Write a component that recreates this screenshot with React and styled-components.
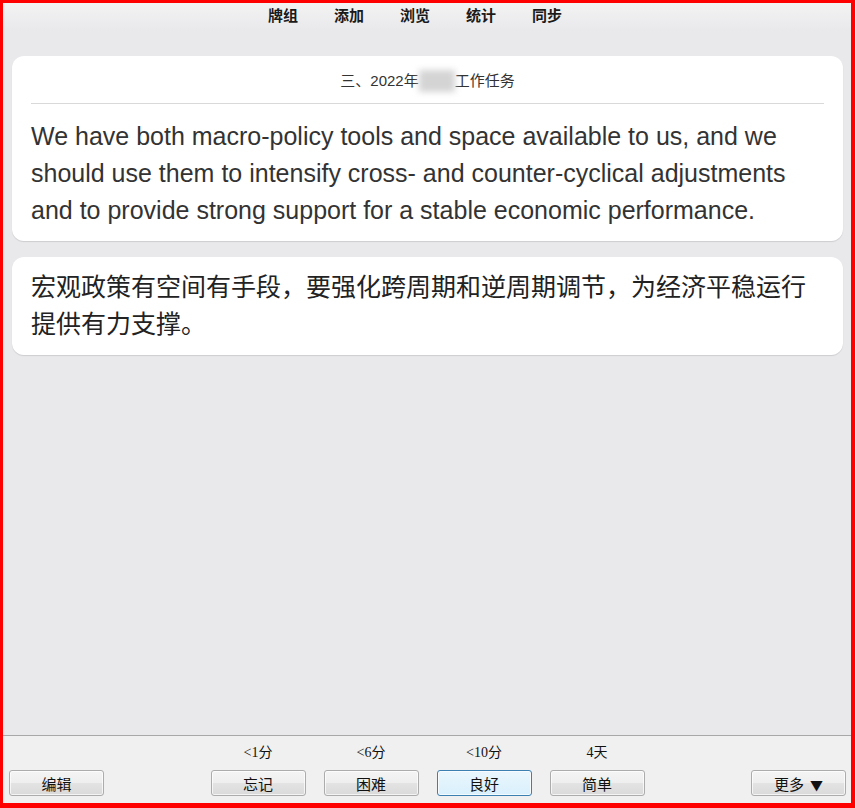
import React from "react";
import styled, { createGlobalStyle } from "styled-components";

const Global = createGlobalStyle`
  html, body { margin: 0; padding: 0; }
  body { font-family: "Liberation Sans", Arial, "Noto Sans CJK SC", sans-serif; }
  * { box-sizing: border-box; }
`;

const Frame = styled.div`
  width: 855px;
  height: 808px;
  border-style: solid;
  border-color: #f00;
  border-width: 3px 4px 5px 3px;
  display: flex;
  flex-direction: column;
  background: #e9e9ec;
  overflow: hidden;
`;

const Nav = styled.nav`
  height: 27px;
  display: flex;
  justify-content: center;
  align-items: flex-start;
  padding-right: 24px;
  background: linear-gradient(#f3f3f3, #e9e9ec);
`;

const NavLink = styled.a`
  font-family: "Noto Sans CJK SC", sans-serif;
  font-weight: 700;
  font-size: 15px;
  color: #1a1a1a;
  padding: 0 18px;
  line-height: 24px;
  text-decoration: none;
`;

const Main = styled.main`
  flex: 1;
  display: flex;
  flex-direction: column;
  gap: 16px;
  padding: 26px 8px 0 9px;
`;

const Card = styled.section`
  background: #fff;
  border-radius: 12px;
  box-shadow: 0 1px 1px rgba(0, 0, 0, 0.12);
  padding: ${(p) => p.$pad || "12px 19px"};
`;

const Title = styled.div`
  text-align: center;
  font-family: "Liberation Sans", Arial, "Noto Sans CJK SC", sans-serif;
  font-size: 15px;
  line-height: 26px;
  color: #333;
`;

const Blur = styled.span`
  display: inline-block;
  width: 36px;
  height: 22px;
  vertical-align: -6px;
  background: #d4d4d4;
  filter: blur(3px);
`;

const Rule = styled.hr`
  border: none;
  border-top: 1px solid #d9d9d9;
  margin: 9px 0 14px;
`;

const English = styled.p`
  margin: 0;
  font-family: "Liberation Sans", Arial, sans-serif;
  font-size: 25px;
  line-height: 37px;
  color: #333;
`;

const Chinese = styled.p`
  margin: 0;
  font-family: "Noto Sans CJK SC", serif;
  font-size: 25px;
  line-height: 37px;
  color: #222;
`;

const Bar = styled.footer`
  border-top: 1px solid #a8a8a8;
  background: #f0f0f0;
  display: grid;
  grid-template-columns: 1fr auto 1fr;
  align-items: end;
  padding: 8px 5px 7px 6px;
`;

const Answers = styled.div`
  display: flex;
  gap: 18px;
`;

const Answer = styled.div`
  display: flex;
  flex-direction: column;
  align-items: center;
  gap: 8px;
`;

const Due = styled.span`
  font-family: "Liberation Serif", "Noto Sans CJK SC", serif;
  font-size: 14px;
  line-height: 18px;
  color: #111;
`;

const Button = styled.button`
  width: 95px;
  height: 26px;
  padding: 0;
  border: 1px solid ${(p) => (p.$focus ? "#3c7fb1" : "#acacac")};
  border-radius: 3px;
  background: ${(p) =>
    p.$focus
      ? "linear-gradient(#eaf6fd, #d9f0fc)"
      : "linear-gradient(#f4f4f4 0%, #eeeeee 50%, #e3e3e3 51%, #dadada 100%)"};
  box-shadow: inset 0 0 0 1px rgba(255, 255, 255, 0.7);
  font-family: "Noto Sans CJK SC", sans-serif;
  font-size: 15px;
  color: #111;
`;

const Arrow = styled.span`
  margin-left: 6px;
  font-size: 13px;
`;

const Side = styled.div`
  display: flex;
  justify-content: ${(p) => p.$justify};
`;

const answers = [
  ["<1分", "忘记"],
  ["<6分", "困难"],
  ["<10分", "良好", true],
  ["4天", "简单"],
];

export default function App() {
  return (
    <>
      <Global />
      <Frame>
        <Nav>
          {["牌组", "添加", "浏览", "统计", "同步"].map((t) => (
            <NavLink key={t}>{t}</NavLink>
          ))}
        </Nav>
        <Main>
          <Card>
            <Title>
              三、2022年<Blur />工作任务
            </Title>
            <Rule />
            <English>
              We have both macro-policy tools and space available to us, and we
              should use them to intensify cross- and counter-cyclical
              adjustments and to provide strong support for a stable economic
              performance.
            </English>
          </Card>
          <Card $pad="10px 19px 14px">
            <Chinese>
              宏观政策有空间有手段，要强化跨周期和逆周期调节，为经济平稳运行提供有力支撑。
            </Chinese>
          </Card>
        </Main>
        <Bar>
          <Side $justify="flex-start">
            <Button>编辑</Button>
          </Side>
          <Answers>
            {answers.map(([d, l, f]) => (
              <Answer key={l}>
                <Due>{d}</Due>
                <Button $focus={f}>{l}</Button>
              </Answer>
            ))}
          </Answers>
          <Side $justify="flex-end">
            <Button>
              更多<Arrow>▼</Arrow>
            </Button>
          </Side>
        </Bar>
      </Frame>
    </>
  );
}
